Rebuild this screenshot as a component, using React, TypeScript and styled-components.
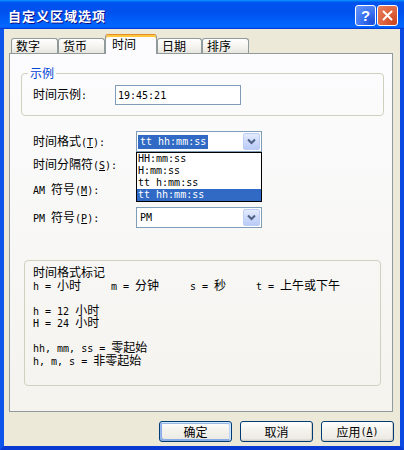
import React from "react";
import styled, { createGlobalStyle } from "styled-components";

const CJK = `"Noto Sans CJK SC", "Liberation Sans", sans-serif`;
const MONO = `"DejaVu Sans Mono", "Liberation Mono", "Noto Sans CJK SC", monospace`;

const Global = createGlobalStyle`
  html, body { margin: 0; padding: 0; background: #fff; }
  body { width: 404px; height: 450px; overflow: hidden; font-family: ${CJK}; font-size: 12px; color: #000; }
`;

const Window = styled.div`
  width: 404px;
  height: 450px;
  display: flex;
  flex-direction: column;
`;

const TitleBar = styled.div`
  height: 29px;
  flex: none;
  box-sizing: border-box;
  display: flex;
  align-items: center;
  padding: 2px 6px 0 8px;
  background: linear-gradient(180deg, #0997ff, #0053ee 8%, #0050ee 40%, #06f 88%, #06f 93%, #005bff 95%, #003dd7 96%, #003dd7);
`;

const Title = styled.div`
  flex: 1;
  color: #fff;
  font-family: ${CJK};
  font-weight: bold;
  font-size: 13px;
  letter-spacing: 1px;
  text-shadow: 1px 1px #0f1089;
`;

const CaptionButtons = styled.div`
  display: flex;
  gap: 1px;
`;

const CaptionButton = styled.div<{ $close?: boolean }>`
  width: 21px;
  height: 21px;
  box-sizing: border-box;
  border: 1px solid #fff;
  border-radius: 3px;
  display: flex;
  align-items: center;
  justify-content: center;
  color: #fff;
  font-family: "Liberation Sans", sans-serif;
  font-weight: bold;
  font-size: 15px;
  background: ${(p) =>
    p.$close
      ? "radial-gradient(circle at 85% 85%, #cc4621 0%, #dd5f3a 40%, #e8805e 100%)"
      : "radial-gradient(circle at 85% 85%, #1b4fd8 0%, #3a72f0 45%, #6c97f8 100%)"};
`;

const Body = styled.div`
  flex: 1;
  display: flex;
  flex-direction: column;
  background: #ece9d8;
  border-left: 4px solid #0e55ec;
  border-right: 4px solid #0b4ae2;
  border-bottom: 4px solid #0839d3;
  padding: 5px 7px 0 5px;
`;

const TabRow = styled.div`
  height: 19px;
  display: flex;
  align-items: flex-end;
  padding-left: 2px;
`;

const Tab = styled.div<{ $active?: boolean; $w: number }>`
  width: ${(p) => p.$w}px;
  box-sizing: border-box;
  height: ${(p) => (p.$active ? 20 : 15)}px;
  margin-bottom: ${(p) => (p.$active ? -1 : 0)}px;
  position: relative;
  z-index: ${(p) => (p.$active ? 1 : 0)};
  border: 1px solid #919b9c;
  border-bottom: none;
  border-radius: 3px 3px 0 0;
  padding-left: ${(p) => (p.$active ? 6 : 4)}px;
  line-height: ${(p) => (p.$active ? 16 : 14)}px;
  font-size: 12px;
  ${(p) =>
    p.$active
      ? `border-top: 1px solid #e68b2c; box-shadow: inset 0 2px #ffc83c; background: #fcfcfe; padding-top: 1px;`
      : `background: linear-gradient(180deg, #ffffff, #f3f2ee 60%, #e6e4dc);`}
`;

const Panel = styled.div`
  height: 359px;
  box-sizing: border-box;
  border: 1px solid #919b9c;
  background: linear-gradient(180deg, #fcfcfe, #f4f3ee);
  padding: 12px 8px 0 11px;
  display: flex;
  flex-direction: column;
`;

const GroupBox = styled.fieldset`
  margin: 0;
  min-inline-size: 0;
  border: 1px solid #d0d0bf;
  border-radius: 4px;
  padding: 5px 11px 10px 11px;
`;

const GroupLegend = styled.legend`
  color: #0046d5;
  font-size: 12px;
  line-height: 14px;
  padding: 0 2px;
  margin-left: -5px;
`;

const FieldRow = styled.div<{ $label: number; $mt?: number; $indent?: number; $h?: number }>`
  display: flex;
  align-items: center;
  height: ${(p) => p.$h ?? 21}px;
  margin-top: ${(p) => p.$mt ?? 0}px;
  padding-left: ${(p) => p.$indent ?? 0}px;
  & > label {
    width: ${(p) => p.$label}px;
    flex: none;
  }
`;

const Label = styled.label`
  font-size: 12px;
  line-height: 14px;
  white-space: pre;
`;

const A = styled.span`
  font-family: ${MONO};
  font-size: 10px;
`;

const TextInput = styled.div`
  width: 126px;
  height: 20px;
  box-sizing: border-box;
  border: 1px solid #7f9db9;
  background: #fff;
  padding-left: 2px;
  display: flex;
  align-items: center;
  font-family: ${MONO};
  font-size: 10px;
`;

const FormBlock = styled.div`
  margin-top: 15px;
  display: flex;
  flex-direction: column;
`;

const Combo = styled.div`
  position: relative;
  width: 126px;
  height: 21px;
  box-sizing: border-box;
  border: 1px solid #7f9db9;
  background: #fff;
  display: flex;
  align-items: center;
`;

const ComboValue = styled.span<{ $selected?: boolean }>`
  margin-left: 1px;
  padding: 0 2px;
  line-height: 14px;
  font-family: ${MONO};
  font-size: 10px;
  background: ${(p) => (p.$selected ? "#316ac5" : "transparent")};
  color: ${(p) => (p.$selected ? "#fff" : "#000")};
`;

const DropButton = styled.div`
  margin-left: auto;
  margin-right: 1px;
  width: 17px;
  height: 17px;
  box-sizing: border-box;
  border: 1px solid #bccdf6;
  border-radius: 2px;
  background: linear-gradient(180deg, #e3ebfe, #cbd8fa 55%, #b9cbf6);
  display: flex;
  align-items: center;
  justify-content: center;
`;

const DropList = styled.ul`
  position: absolute;
  top: calc(100% + 1px);
  left: -1px;
  width: 126px;
  box-sizing: border-box;
  margin: 0;
  padding: 0;
  list-style: none;
  border: 1px solid #000;
  background: #fff;
  z-index: 2;
`;

const DropItem = styled.li<{ $selected?: boolean }>`
  height: 12px;
  line-height: 12px;
  padding-left: 1px;
  font-family: ${MONO};
  font-size: 10px;
  background: ${(p) => (p.$selected ? "#316ac5" : "#fff")};
  color: ${(p) => (p.$selected ? "#fff" : "#000")};
`;

const InfoBox = styled.div`
  margin: 32px 3px 0 3px;
  height: 126px;
  box-sizing: border-box;
  border: 1px solid #d0d0bf;
  border-radius: 4px;
  padding: 5px 8px 0 8px;
  font-size: 12px;
  line-height: 12.5px;
`;

const InfoLine = styled.div`
  height: 12.5px;
  white-space: pre;
`;

const InfoColumns = styled.div`
  display: grid;
  grid-template-columns: 78px 79px 66px auto;
  height: 12.5px;
  white-space: pre;
`;

const ButtonRow = styled.div`
  display: flex;
  justify-content: flex-end;
  gap: 8px;
  margin-top: 9px;
  margin-right: -1px;
`;

const Button = styled.div<{ $default?: boolean }>`
  width: 73px;
  height: 21px;
  box-sizing: border-box;
  border: 1px solid #003c74;
  border-radius: 3px;
  background: linear-gradient(180deg, #ffffff, #f4f3ee 40%, #ecebe6 86%, #d6d0c5);
  display: flex;
  align-items: center;
  justify-content: center;
  font-size: 12px;
  box-shadow: ${(p) =>
    p.$default
      ? "inset -1px 1px #cee7ff, inset 1px 2px #98b8ea, inset -2px 2px #bcd4f6, inset 1px -1px #89ade4, inset 2px -2px #89ade4"
      : "inset -1px -1px #d6d0c5"};
`;

const Chevron = () => (
  <svg width="9" height="7" viewBox="0 0 9 7">
    <path d="M1 1.5 L4.5 5 L8 1.5" fill="none" stroke="#4d6185" strokeWidth="2" />
  </svg>
);

const CloseGlyph = () => (
  <svg width="11" height="11" viewBox="0 0 11 11">
    <path d="M1.5 1.5 L9.5 9.5 M9.5 1.5 L1.5 9.5" stroke="#fff" strokeWidth="2" strokeLinecap="round" />
  </svg>
);

export default function App() {
  return (
    <>
      <Global />
      <Window>
        <TitleBar>
          <Title>自定义区域选项</Title>
          <CaptionButtons>
            <CaptionButton>?</CaptionButton>
            <CaptionButton $close>
              <CloseGlyph />
            </CaptionButton>
          </CaptionButtons>
        </TitleBar>
        <Body>
          <TabRow>
            <Tab $w={47}>数字</Tab>
            <Tab $w={47}>货币</Tab>
            <Tab $w={52} $active>
              时间
            </Tab>
            <Tab $w={45}>日期</Tab>
            <Tab $w={47}>排序</Tab>
          </TabRow>
          <Panel>
            <GroupBox>
              <GroupLegend>示例</GroupLegend>
              <FieldRow $label={82} $h={20}>
                <Label>
                  时间示例<A>:</A>
                </Label>
                <TextInput>19:45:21</TextInput>
              </FieldRow>
            </GroupBox>
            <FormBlock>
              <FieldRow $label={103} $indent={12}>
                <Label>
                  时间格式<A>(<u>T</u>):</A>
                </Label>
                <Combo>
                  <ComboValue $selected>tt hh:mm:ss</ComboValue>
                  <DropButton>
                    <Chevron />
                  </DropButton>
                  <DropList>
                    <DropItem>HH:mm:ss</DropItem>
                    <DropItem>H:mm:ss</DropItem>
                    <DropItem>tt h:mm:ss</DropItem>
                    <DropItem $selected>tt hh:mm:ss</DropItem>
                  </DropList>
                </Combo>
              </FieldRow>
              <FieldRow $label={103} $indent={12} $mt={2}>
                <Label>
                  时间分隔符<A>(<u>S</u>):</A>
                </Label>
                <Combo />
              </FieldRow>
              <FieldRow $label={103} $indent={12} $mt={4}>
                <Label>
                  <A>AM </A>符号<A>(<u>M</u>):</A>
                </Label>
                <Combo />
              </FieldRow>
              <FieldRow $label={103} $indent={12} $mt={7}>
                <Label>
                  <A>PM </A>符号<A>(<u>P</u>):</A>
                </Label>
                <Combo>
                  <ComboValue>PM</ComboValue>
                  <DropButton>
                    <Chevron />
                  </DropButton>
                </Combo>
              </FieldRow>
            </FormBlock>
            <InfoBox>
              <InfoLine>时间格式标记</InfoLine>
              <InfoColumns>
                <span>
                  <A>h = </A>小时
                </span>
                <span>
                  <A>m = </A>分钟
                </span>
                <span>
                  <A>s = </A>秒
                </span>
                <span>
                  <A>t = </A>上午或下午
                </span>
              </InfoColumns>
              <InfoLine />
              <InfoLine>
                <A>h = 12 </A>小时
              </InfoLine>
              <InfoLine>
                <A>H = 24 </A>小时
              </InfoLine>
              <InfoLine />
              <InfoLine>
                <A>hh, mm, ss = </A>零起始
              </InfoLine>
              <InfoLine>
                <A>h, m, s = </A>非零起始
              </InfoLine>
            </InfoBox>
          </Panel>
          <ButtonRow>
            <Button $default>确定</Button>
            <Button>取消</Button>
            <Button>
              应用<A>(<u>A</u>)</A>
            </Button>
          </ButtonRow>
        </Body>
      </Window>
    </>
  );
}
